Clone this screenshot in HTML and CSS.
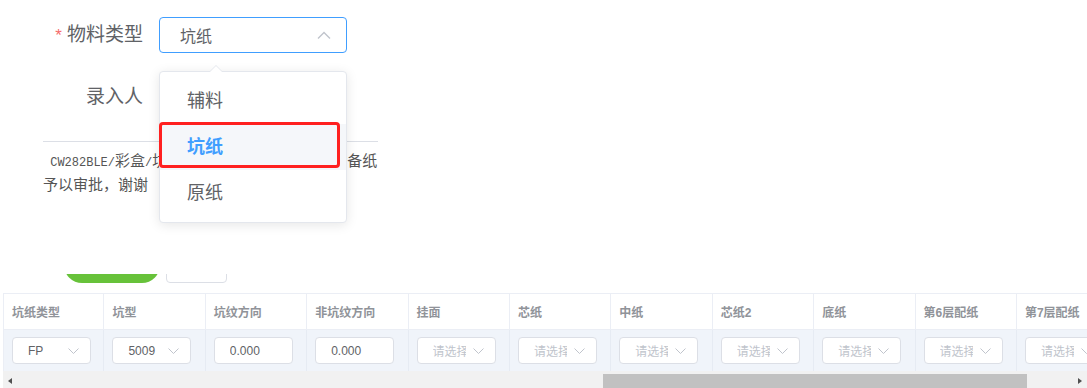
FILE: index.html
```html
<!DOCTYPE html>
<html lang="zh-CN">
<head>
<meta charset="utf-8">
<title>物料类型</title>
<link rel="stylesheet" href="styles.css">
</head>
<body>
<div class="form">
  <div class="row">
    <label class="label"><span class="req">*</span>物料类型</label>
    <div class="select">
      <span>坑纸</span>
      <svg class="arrow-up" width="14" height="8" viewBox="0 0 14 8"><polyline points="1,7.5 7,1.5 13,7.5" fill="none" stroke="#c0c4cc" stroke-width="1.4"/></svg>
    </div>
  </div>
  <div class="row">
    <label class="label">录入人</label>
  </div>
  <div class="note">
    <div class="line"><span class="code"> CW282BLE/</span>彩盒<span class="code">/</span>坑纸物料需求已确认，需申请备纸，请</div>
    <div class="line">予以审批，谢谢</div>
  </div>
  <div class="actions">
    <div class="btn-green"></div>
    <div class="btn-plain"></div>
  </div>
</div>

<div class="table">
  <div class="thead">
    <div class="th">坑纸类型</div>
    <div class="th">坑型</div>
    <div class="th">坑纹方向</div>
    <div class="th">非坑纹方向</div>
    <div class="th">挂面</div>
    <div class="th">芯纸</div>
    <div class="th">中纸</div>
    <div class="th">芯纸2</div>
    <div class="th">底纸</div>
    <div class="th">第6层配纸</div>
    <div class="th">第7层配纸</div>
  </div>
  <div class="trow">
    <div class="td"><div class="inp"><span class="val">FP</span><svg class="chev" width="11" height="6" viewBox="0 0 11 6"><polyline points="0.5,0.5 5.5,5.5 10.5,0.5" fill="none" stroke="#c0c4cc" stroke-width="1"/></svg></div></div>
    <div class="td"><div class="inp"><span class="val">5009</span><svg class="chev" width="11" height="6" viewBox="0 0 11 6"><polyline points="0.5,0.5 5.5,5.5 10.5,0.5" fill="none" stroke="#c0c4cc" stroke-width="1"/></svg></div></div>
    <div class="td"><div class="inp"><span class="val">0.000</span></div></div>
    <div class="td"><div class="inp"><span class="val">0.000</span></div></div>
    <div class="td"><div class="inp"><span class="val ph">请选择</span><svg class="chev" width="11" height="6" viewBox="0 0 11 6"><polyline points="0.5,0.5 5.5,5.5 10.5,0.5" fill="none" stroke="#c0c4cc" stroke-width="1"/></svg></div></div>
    <div class="td"><div class="inp"><span class="val ph">请选择</span><svg class="chev" width="11" height="6" viewBox="0 0 11 6"><polyline points="0.5,0.5 5.5,5.5 10.5,0.5" fill="none" stroke="#c0c4cc" stroke-width="1"/></svg></div></div>
    <div class="td"><div class="inp"><span class="val ph">请选择</span><svg class="chev" width="11" height="6" viewBox="0 0 11 6"><polyline points="0.5,0.5 5.5,5.5 10.5,0.5" fill="none" stroke="#c0c4cc" stroke-width="1"/></svg></div></div>
    <div class="td"><div class="inp"><span class="val ph">请选择</span><svg class="chev" width="11" height="6" viewBox="0 0 11 6"><polyline points="0.5,0.5 5.5,5.5 10.5,0.5" fill="none" stroke="#c0c4cc" stroke-width="1"/></svg></div></div>
    <div class="td"><div class="inp"><span class="val ph">请选择</span><svg class="chev" width="11" height="6" viewBox="0 0 11 6"><polyline points="0.5,0.5 5.5,5.5 10.5,0.5" fill="none" stroke="#c0c4cc" stroke-width="1"/></svg></div></div>
    <div class="td"><div class="inp"><span class="val ph">请选择</span><svg class="chev" width="11" height="6" viewBox="0 0 11 6"><polyline points="0.5,0.5 5.5,5.5 10.5,0.5" fill="none" stroke="#c0c4cc" stroke-width="1"/></svg></div></div>
    <div class="td"><div class="inp"><span class="val ph">请选择</span><svg class="chev" width="11" height="6" viewBox="0 0 11 6"><polyline points="0.5,0.5 5.5,5.5 10.5,0.5" fill="none" stroke="#c0c4cc" stroke-width="1"/></svg></div></div>
  </div>
  <div class="hscroll">
    <div class="sb-btn"><span class="tri-left"></span></div>
    <div class="sb-track"><div class="sb-thumb"></div></div>
    <div class="sb-btn"><span class="tri-right"></span></div>
  </div>
</div>

<div class="dropdown">
  <ul class="menu">
    <li class="item">辅料</li>
    <li class="item selected">坑纸</li>
    <li class="item">原纸</li>
  </ul>
</div>
<div class="highlight-box"></div>
</body>
</html>
```

FILE: styles.css
```css
* { box-sizing: border-box; margin: 0; padding: 0; }
body {
  margin: 0;
  width: 1087px;
  height: 388px;
  overflow: hidden;
  position: relative;
  background: #fff;
  color: #606266;
  font-family: "Liberation Sans", "Noto Sans CJK SC", sans-serif;
}
.form { padding-top: 17px; }
.row { display: flex; align-items: center; height: 36px; }
.row + .row { margin-top: 26px; }
.label {
  width: 143px;
  text-align: right;
  font-size: 19px;
  color: #606266;
  line-height: 36px;
}
.req { color: #f56c6c; margin-right: 5px; font-size: 17px; }
.select {
  margin-left: 16px;
  width: 188px;
  height: 36px;
  border: 1px solid #409eff;
  border-radius: 4px;
  display: flex;
  align-items: center;
  justify-content: space-between;
  padding: 0 15px 0 20px;
  font-size: 16px;
  color: #606266;
}
.note {
  margin-left: 43px;
  margin-top: 26px;
  width: 335px;
  border-top: 1px solid #dcdfe6;
  padding-top: 7px;
  overflow: hidden;
  font-size: 15px;
  line-height: 24px;
  color: #555;
  font-family: "Liberation Serif", "Noto Sans CJK SC", serif;
}
.line { white-space: pre; height: 24px; overflow: hidden; }
.code { font-family: "Liberation Mono", monospace; font-size: 12px; line-height: 1; }
.actions {
  margin-top: 77px;
  height: 9px;
  overflow: hidden;
  display: flex;
  align-items: flex-end;
  padding-left: 64px;
  gap: 6px;
}
.btn-green {
  flex: none;
  width: 96px;
  height: 36px;
  border-radius: 18px;
  background: #67c23a;
}
.btn-plain {
  flex: none;
  width: 61px;
  height: 36px;
  border: 1px solid #dcdfe6;
  border-radius: 4px;
  background: #fff;
}
.table {
  margin-top: 10px;
  margin-left: 3px;
  width: 1084px;
  overflow: hidden;
}
.thead, .trow {
  display: grid;
  grid-template-columns: repeat(11, 101.4px);
}
.th {
  height: 37px;
  border-top: 1px solid #ebeef5;
  border-right: 1px solid #ebeef5;
  border-bottom: 1px solid #ebeef5;
  padding-left: 8px;
  display: flex;
  align-items: center;
  font-size: 12px;
  font-weight: 700;
  color: #909399;
  white-space: nowrap;
  background: #fff;
}
.th:first-child, .td:first-child { border-left: 1px solid #ebeef5; }
.td {
  height: 41px;
  background: #f0f4fa;
  border-right: 1px solid #e6ebf3;
  padding-left: 8px;
  display: flex;
  align-items: center;
}
.inp {
  width: 79px;
  height: 27px;
  flex: none;
  background: #fff;
  border: 1px solid #dcdfe6;
  border-radius: 4px;
  display: flex;
  align-items: center;
  padding-left: 15px;
  padding-right: 11px;
  font-size: 12px;
  color: #606266;
}
.val { flex: 1; overflow: hidden; white-space: nowrap; }
.val.ph { color: #c0c4cc; }
.chev { flex: none; margin-left: 7px; }
.hscroll {
  height: 17px;
  background: #f1f1f1;
  display: flex;
}
.sb-btn {
  width: 14px;
  flex: none;
  display: flex;
  align-items: center;
  justify-content: center;
}
.tri-left {
  width: 0; height: 0;
  border-top: 3.5px solid transparent;
  border-bottom: 3.5px solid transparent;
  border-right: 4px solid #505050;
  margin-top: 2px;
}
.tri-right {
  width: 0; height: 0;
  border-top: 3.5px solid transparent;
  border-bottom: 3.5px solid transparent;
  border-left: 4px solid #505050;
  margin-top: 2px;
}
.sb-track { flex: 1; padding-top: 3px; }
.sb-thumb {
  margin-left: 586px;
  width: 424px;
  height: 14px;
  background: #c1c1c1;
}
.dropdown {
  position: absolute;
  left: 159px;
  top: 71px;
  width: 188px;
  background: #fff;
  border: 1px solid #e4e7ed;
  border-radius: 4px;
  box-shadow: 0 2px 12px 0 rgba(0, 0, 0, 0.1);
  padding: 6px 0;
}
.dropdown::before {
  content: "";
  position: absolute;
  left: 50px;
  top: -13px;
  border: 6px solid transparent;
  border-bottom-color: #e4e7ed;
}
.dropdown::after {
  content: "";
  position: absolute;
  left: 50px;
  top: -12px;
  border: 6px solid transparent;
  border-bottom-color: #fff;
}
.menu { list-style: none; }
.item {
  height: 46px;
  line-height: 46px;
  padding-left: 27px;
  font-size: 18px;
  color: #606266;
}
.item.selected {
  color: #409eff;
  font-weight: 700;
  background: #f5f7fa;
}
.highlight-box {
  position: absolute;
  left: 159px;
  top: 122px;
  width: 181px;
  height: 46px;
  border: 3px solid #ff2020;
  border-radius: 4px;
}
```
